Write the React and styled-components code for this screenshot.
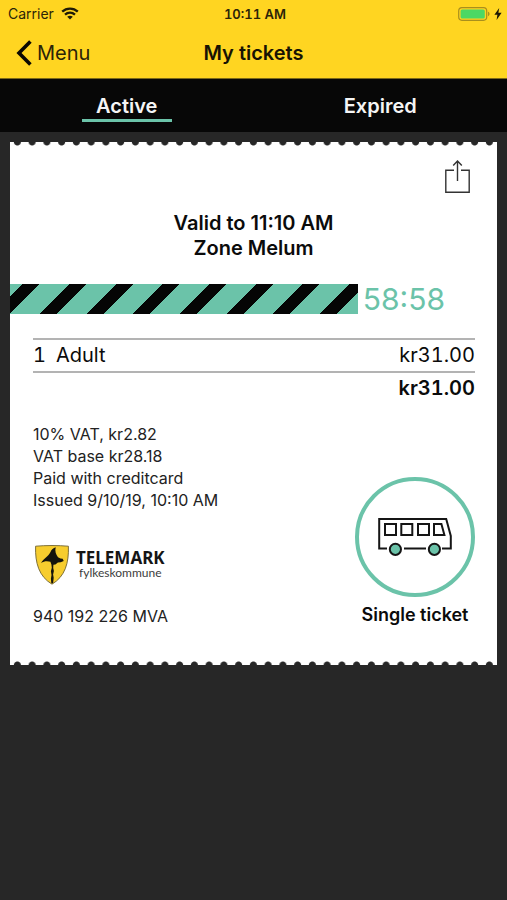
import React from "react";
import styled, { createGlobalStyle } from "styled-components";

const mint = "#6bc3a9";
const ink = "#0b0b0b";
const night = "#272727";

const GlobalStyle = createGlobalStyle`
  * { box-sizing: border-box; }
  body {
    margin: 0;
    background: ${night};
    color: ${ink};
    font-family: Inter, "Liberation Sans", sans-serif;
  }
  button { font: inherit; color: inherit; background: none; border: 0; padding: 0; cursor: pointer; }
`;

const Screen = styled.div`
  min-height: 100vh;
  background: ${night};
`;

const Header = styled.header`
  background: #ffd521;
  border-bottom: 1px solid #7d6a18;
`;

const StatusBar = styled.div`
  display: grid;
  grid-template-columns: 1fr auto 1fr;
  align-items: center;
  height: 27px;
  padding: 0 5px 0 8px;
  font-size: 14px;
  color: #2b2408;
`;

const StatusSide = styled.div`
  display: flex;
  align-items: center;
  justify-content: ${(p) => (p.$end ? "flex-end" : "flex-start")};
  gap: ${(p) => (p.$end ? 4 : 7)}px;
`;

const Clock = styled.time`
  font-size: 13px;
  font-weight: 600;
  font-variant-numeric: tabular-nums;
`;

const NavBar = styled.nav`
  display: grid;
  grid-template-columns: 1fr auto 1fr;
  align-items: center;
  height: 51px;
  padding: 0 16px;
`;

const BackButton = styled.button`
  display: flex;
  align-items: center;
  gap: 5px;
  justify-self: start;
  && {
    font-size: 20px;
    color: #2b2408;
  }
`;

const Title = styled.h1`
  margin: 0;
  font-size: 20px;
  font-weight: 600;
  color: #171303;
`;

const Tabs = styled.div`
  display: grid;
  grid-template-columns: 1fr 1fr;
  height: 53px;
  padding-bottom: 10px;
  background: #070707;
`;

const Tab = styled.button`
  justify-self: center;
  align-self: end;
  min-width: 90px;
  height: 28px;
  && {
    border-bottom: 3px solid ${(p) => (p["aria-selected"] ? mint : "transparent")};
    color: #f5f5f5;
    font-size: 20px;
    font-weight: 600;
    line-height: 25px;
  }
`;

const Main = styled.main`
  padding: 10px;
`;

const Ticket = styled.article`
  position: relative;
  padding: 18px 0 38px;
  background: #fff;
`;

const Perforation = styled.div`
  position: absolute;
  left: 0;
  right: 0;
  height: 4px;
  ${(p) => (p.$bottom ? "bottom: 0;" : "top: 0;")}
  background-image: radial-gradient(
    circle at 50% ${(p) => (p.$bottom ? "100%" : "0%")},
    ${night} 3px,
    transparent 4px
  );
  background-size: calc(100% / 33) 4px;
`;

const ShareButton = styled.button`
  display: block;
  margin-left: auto;
  margin-right: 27px;
  height: 33px;
`;

const Validity = styled.h2`
  margin: 18px 0 23px;
  font-size: 20px;
  font-weight: 600;
  line-height: 25px;
  text-align: center;
`;

const TimeRow = styled.div`
  display: flex;
  align-items: center;
  gap: 5px;
  height: 30px;
  padding-right: 52px;
`;

const StripedBar = styled.div`
  flex: 1;
  height: 30px;
  background: repeating-linear-gradient(
    135deg,
    ${mint} 0 9px,
    #050505 9px 21px,
    ${mint} 21px 33px
  );
`;

const Countdown = styled.time`
  font-size: 30px;
  line-height: 30px;
  color: ${mint};
`;

const Details = styled.div`
  padding: 24px 22px 0 23px;
`;

const PriceTable = styled.table`
  width: 100%;
  border-collapse: collapse;
  font-size: 20px;
  line-height: 31px;
  font-variant-numeric: tabular-nums;
  tbody tr {
    border-top: 2px solid #b3b3b3;
    border-bottom: 2px solid #b3b3b3;
  }
`;

const Cell = styled.td`
  padding: 0;
  text-align: ${(p) => (p.$right ? "right" : "left")};
  font-weight: ${(p) => (p.$strong ? 600 : 400)};
`;

const Quantity = styled.span`
  display: inline-block;
  width: 23px;
`;

const Lower = styled.div`
  display: flex;
  justify-content: space-between;
  align-items: flex-end;
  margin-top: 19px;
`;

const Receipt = styled.div`
  font-size: 16px;
  line-height: 22px;
  color: #222;
`;

const Line = styled.p`
  margin: 0;
`;

const Authority = styled.div`
  display: flex;
  align-items: flex-start;
  gap: 7px;
  height: 41px;
  margin: 34px 0 19px;
  padding-left: 2px;
`;

const AuthorityName = styled.div`
  padding-top: 4px;
  font-family: "Noto Sans", sans-serif;
  font-size: 17px;
  font-weight: 700;
  line-height: 18px;
  color: #151515;
`;

const AuthorityKind = styled.div`
  padding-left: 3px;
  font-family: Lato, sans-serif;
  font-size: 12px;
  font-weight: 400;
  line-height: 12px;
  color: #3d3d3d;
`;

const TicketKind = styled.div`
  display: flex;
  flex-direction: column;
  align-items: center;
  gap: 6px;
  font-size: 18px;
  font-weight: 600;
  line-height: 24px;
`;

const Badge = styled.div`
  display: flex;
  align-items: center;
  justify-content: center;
  width: 120px;
  height: 120px;
  border: 4px solid ${mint};
  border-radius: 50%;
`;

const WifiIcon = () => (
  <svg width="18" height="13" viewBox="0 0 18 13" fill="none" stroke="#201b06" strokeWidth="2.3" aria-hidden="true">
    <path d="M1.2 4.7C5.6.5 12.4.5 16.8 4.7" />
    <path d="M4 7.7c2.9-2.6 7.1-2.6 10 0" />
    <path d="M9 12.4 6.2 9.7c1.7-1.3 3.9-1.3 5.6 0z" fill="#201b06" stroke="none" />
  </svg>
);

const BatteryIcon = () => (
  <svg width="32" height="14" viewBox="0 0 32 14" aria-hidden="true">
    <rect x=".7" y=".7" width="28" height="12.6" rx="3.2" fill="none" stroke="#a98f1d" strokeWidth="1.2" />
    <rect x="2.6" y="2.4" width="24.2" height="9.2" rx="1.6" fill="#4cd864" />
    <path d="M30 4.8c2 .5 2 3.9 0 4.4z" fill="#a98f1d" />
  </svg>
);

const BoltIcon = () => (
  <svg width="8" height="12" viewBox="0 0 8 12" aria-hidden="true">
    <path d="M5.2 0 .4 6.8h3L2.6 12l5-7.2H4.4z" fill="#1b1705" />
  </svg>
);

const BackIcon = () => (
  <svg width="16" height="26" viewBox="0 0 16 26" fill="none" stroke="#0b0902" strokeWidth="3.6" aria-hidden="true">
    <path d="M14.4 1.5 3 13l11.4 11.5" />
  </svg>
);

const ShareIcon = () => (
  <svg width="25" height="33" viewBox="0 0 25 33" fill="none" stroke="#333" strokeWidth="1.4" aria-hidden="true">
    <path d="M9 10.3H.8v22h23.4v-22H16" />
    <path d="M12.5 21V1M8.2 5.6 12.5 1l4.3 4.6" />
  </svg>
);

const BusIcon = () => (
  <svg width="76" height="40" viewBox="0 0 76 40" fill="none" stroke="#151515" strokeWidth="2" aria-hidden="true">
    <path d="M10 31.5H2.2V2h67l4.600 17v12.500H65M27 31.5h22" />
    <path d="M8 7h11v11H8zM24.300 7h11v11h-11zM41 7h11v11H41zM57 7h7.400l3 11H57z" />
    <circle cx="18.400" cy="32.300" r="5.600" fill={mint} />
    <circle cx="57.400" cy="32.300" r="5.600" fill={mint} />
  </svg>
);

const Shield = () => (
  <svg width="34" height="40" viewBox="0 0 34 40" aria-hidden="true">
    <path
      d="M.6 1.2C11 .3 23 .3 33.4 1.2 34 18 30 31.5 17 39.2 4 31.5 0 18 .6 1.2z"
      fill="#f7cd2e"
      stroke="#6f6330"
      strokeWidth=".9"
    />
    <path
      d="M6 18C8.500 13.500 13.500 11.500 15.500 7c1-2.300 2.800-3.800 5.200-4.700-1 4 .2 7.200 2.300 9.900l2.500 1.300 2.200.2 1 2.300-3 1.200-2.800.2-2.500 2-2 .3-.2 3.300.7 3-.8 3.600.6 3.200-.6 5.500h-1.800l-.4-4.600.6-3.600-.6-3.800.9-3.500-.4-3.300-1-2.700C13 15.800 9 15.800 6 18z"
      fill="#15140c"
    />
  </svg>
);

export default function App() {
  return (
    <Screen>
      <GlobalStyle />
      <Header>
        <StatusBar>
          <StatusSide>
            <span>Carrier</span>
            <WifiIcon />
          </StatusSide>
          <Clock>10:11 AM</Clock>
          <StatusSide $end>
            <BatteryIcon />
            <BoltIcon />
          </StatusSide>
        </StatusBar>
        <NavBar>
          <BackButton type="button">
            <BackIcon />
            Menu
          </BackButton>
          <Title>My tickets</Title>
        </NavBar>
      </Header>
      <Tabs role="tablist">
        <Tab type="button" role="tab" aria-selected={true}>Active</Tab>
        <Tab type="button" role="tab" aria-selected={false}>Expired</Tab>
      </Tabs>
      <Main>
        <Ticket>
          <Perforation />
          <ShareButton type="button" aria-label="Share">
            <ShareIcon />
          </ShareButton>
          <Validity>
            Valid to 11:10 AM
            <br />
            Zone Melum
          </Validity>
          <TimeRow>
            <StripedBar />
            <Countdown>58:58</Countdown>
          </TimeRow>
          <Details>
            <PriceTable>
              <tbody>
                <tr>
                  <Cell>
                    <Quantity>1</Quantity>
                    Adult
                  </Cell>
                  <Cell $right>kr31.00</Cell>
                </tr>
              </tbody>
              <tfoot>
                <tr>
                  <Cell $right $strong colSpan={2}>kr31.00</Cell>
                </tr>
              </tfoot>
            </PriceTable>
            <Lower>
              <Receipt>
                <Line>10% VAT, kr2.82</Line>
                <Line>VAT base kr28.18</Line>
                <Line>Paid with creditcard</Line>
                <Line>Issued 9/10/19, 10:10 AM</Line>
                <Authority>
                  <Shield />
                  <AuthorityName>
                    TELEMARK
                    <AuthorityKind>fylkeskommune</AuthorityKind>
                  </AuthorityName>
                </Authority>
                <Line>940 192 226 MVA</Line>
              </Receipt>
              <TicketKind>
                <Badge>
                  <BusIcon />
                </Badge>
                Single ticket
              </TicketKind>
            </Lower>
          </Details>
          <Perforation $bottom />
        </Ticket>
      </Main>
    </Screen>
  );
}
